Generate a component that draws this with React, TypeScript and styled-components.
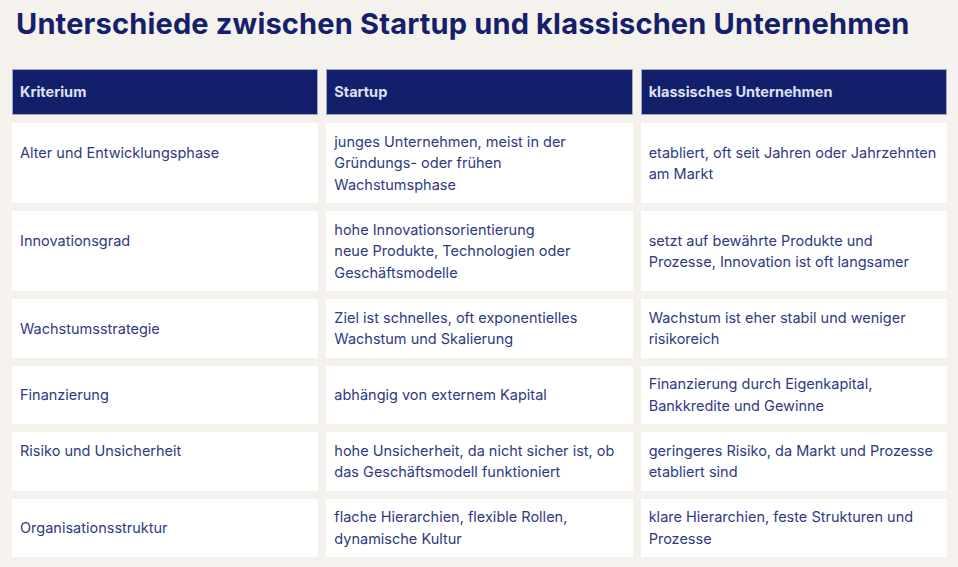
import styled, { createGlobalStyle } from 'styled-components'

const GlobalStyle = createGlobalStyle`
  html, body {
    margin: 0;
    padding: 0;
    background: #f5f2ee;
  }
  body {
    font-family: Inter, "Noto Sans", "Liberation Sans", sans-serif;
  }
`

const Page = styled.div`
  padding: 5px 11px 8px 12px;
`

const Title = styled.h1`
  margin: 0 0 26px 4px;
  font-size: 29px;
  line-height: 38px;
  font-weight: 700;
  color: #14206b;
  letter-spacing: 0.17px;
`

const Grid = styled.div`
  display: grid;
  grid-template-columns: repeat(3, 1fr);
  column-gap: 8px;
  row-gap: 8px;
`

const HeadCell = styled.div`
  display: flex;
  align-items: center;
  background: #12206b;
  border: 1px solid #a3a8c8;
  padding: 11px 7px;
  font-size: 14.5px;
  line-height: 22px;
  font-weight: 700;
  color: #dde0f4;
`

const Cell = styled.div`
  display: flex;
  align-items: center;
  background: #ffffff;
  padding: 7.75px 8px;
  font-size: 14.5px;
  line-height: 21.5px;
  font-weight: 400;
  color: #2f3984;
`

const Text = styled.div``

interface Row {
  label: string
  padLabel?: boolean
  startup: string[]
  classic: string[]
}

const rows: Row[] = [
  {
    label: 'Alter und Entwicklungsphase',
    padLabel: true,
    startup: ['junges Unternehmen, meist in der', 'Gründungs- oder frühen', 'Wachstumsphase'],
    classic: ['etabliert, oft seit Jahren oder Jahrzehnten', 'am Markt'],
  },
  {
    label: 'Innovationsgrad',
    padLabel: true,
    startup: ['hohe Innovationsorientierung', 'neue Produkte, Technologien oder', 'Geschäftsmodelle'],
    classic: ['setzt auf bewährte Produkte und', 'Prozesse, Innovation ist oft langsamer'],
  },
  {
    label: 'Wachstumsstrategie',
    startup: ['Ziel ist schnelles, oft exponentielles', 'Wachstum und Skalierung'],
    classic: ['Wachstum ist eher stabil und weniger', 'risikoreich'],
  },
  {
    label: 'Finanzierung',
    startup: ['abhängig von externem Kapital'],
    classic: ['Finanzierung durch Eigenkapital,', 'Bankkredite und Gewinne'],
  },
  {
    label: 'Risiko und Unsicherheit',
    padLabel: true,
    startup: ['hohe Unsicherheit, da nicht sicher ist, ob', 'das Geschäftsmodell funktioniert'],
    classic: ['geringeres Risiko, da Markt und Prozesse', 'etabliert sind'],
  },
  {
    label: 'Organisationsstruktur',
    startup: ['flache Hierarchien, flexible Rollen,', 'dynamische Kultur'],
    classic: ['klare Hierarchien, feste Strukturen und', 'Prozesse'],
  },
]

function Lines({ lines }: { lines: string[] }) {
  return (
    <Text>
      {lines.map((l, i) => (
        <span key={i}>
          {i > 0 && <br />}
          {l}
        </span>
      ))}
    </Text>
  )
}

export default function App() {
  return (
    <>
      <GlobalStyle />
      <Page>
        <Title>Unterschiede zwischen Startup und klassischen Unternehmen</Title>
        <Grid>
          <HeadCell>Kriterium</HeadCell>
          <HeadCell>Startup</HeadCell>
          <HeadCell>klassisches Unternehmen</HeadCell>
          {rows.map(r => (
            <>
              <Cell key={r.label + '-a'}>
                <Lines lines={r.padLabel ? [r.label, '\u00a0'] : [r.label]} />
              </Cell>
              <Cell key={r.label + '-b'}>
                <Lines lines={r.startup} />
              </Cell>
              <Cell key={r.label + '-c'}>
                <Lines lines={r.classic} />
              </Cell>
            </>
          ))}
        </Grid>
      </Page>
    </>
  )
}
